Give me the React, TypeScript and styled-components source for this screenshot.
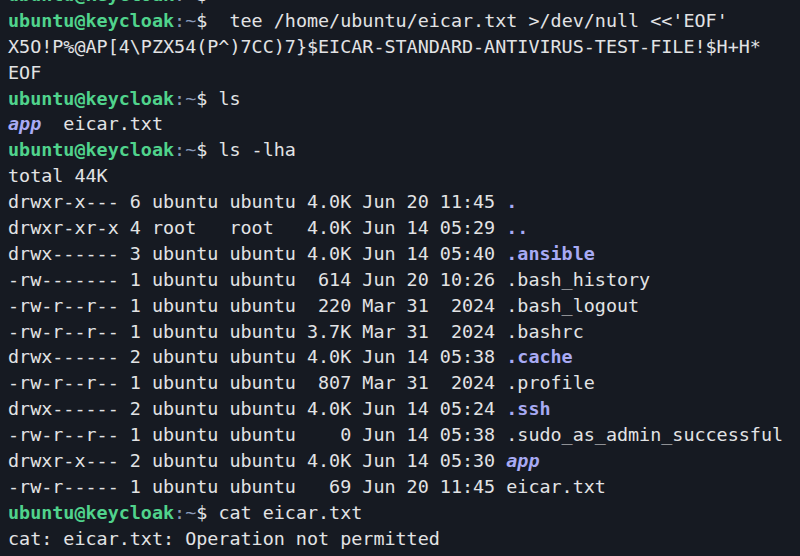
import React from "react";
import styled, { createGlobalStyle } from "styled-components";

const Global = createGlobalStyle`
  html, body { margin: 0; padding: 0; background: #161a22; }
  body { width: 800px; height: 556px; overflow: hidden; }
`;

const Terminal = styled.div`
  width: 800px;
  height: 556px;
  overflow: hidden;
  background: #161a22;
  box-sizing: border-box;
`;

const Screen = styled.pre`
  margin: -18px 0 0 0;
  padding: 0 0 0 8px;
  font-family: "DejaVu Sans Mono", "Liberation Mono", monospace;
  font-size: 18.4px;
  line-height: 25.9px;
  color: #e2e3e5;
  white-space: pre;
`;

const Line = styled.div`
  height: 25.9px;
`;

const User = styled.span`
  color: #50d38c;
  font-weight: bold;
`;

const Path = styled.span`
  color: #8799b8;
`;

const Dollar = styled.span`
  color: #e2e3e5;
`;

const Dir = styled.span<{ $italic?: boolean }>`
  color: #a8aaf4;
  font-weight: bold;
  font-style: ${(p) => (p.$italic ? "italic" : "normal")};
`;

const Prompt: React.FC<{ cmd: string }> = ({ cmd }) => (
  <Line>
    <User>ubuntu@keycloak</User>
    <Path>:~</Path>
    <Dollar>$</Dollar>
    {cmd}
  </Line>
);

type Entry = { meta: string; name: string; dir?: boolean; italic?: boolean };

const entries: Entry[] = [
  { meta: "drwxr-x--- 6 ubuntu ubuntu 4.0K Jun 20 11:45 ", name: ".", dir: true },
  { meta: "drwxr-xr-x 4 root   root   4.0K Jun 14 05:29 ", name: "..", dir: true },
  { meta: "drwx------ 3 ubuntu ubuntu 4.0K Jun 14 05:40 ", name: ".ansible", dir: true },
  { meta: "-rw------- 1 ubuntu ubuntu  614 Jun 20 10:26 ", name: ".bash_history" },
  { meta: "-rw-r--r-- 1 ubuntu ubuntu  220 Mar 31  2024 ", name: ".bash_logout" },
  { meta: "-rw-r--r-- 1 ubuntu ubuntu 3.7K Mar 31  2024 ", name: ".bashrc" },
  { meta: "drwx------ 2 ubuntu ubuntu 4.0K Jun 14 05:38 ", name: ".cache", dir: true },
  { meta: "-rw-r--r-- 1 ubuntu ubuntu  807 Mar 31  2024 ", name: ".profile" },
  { meta: "drwx------ 2 ubuntu ubuntu 4.0K Jun 14 05:24 ", name: ".ssh", dir: true },
  { meta: "-rw-r--r-- 1 ubuntu ubuntu    0 Jun 14 05:38 ", name: ".sudo_as_admin_successful" },
  { meta: "drwxr-x--- 2 ubuntu ubuntu 4.0K Jun 14 05:30 ", name: "app", dir: true, italic: true },
  { meta: "-rw-r----- 1 ubuntu ubuntu   69 Jun 20 11:45 ", name: "eicar.txt" },
];

export default function App() {
  return (
    <Terminal>
      <Global />
      <Screen>
        <Prompt cmd=" " />
        <Prompt cmd="  tee /home/ubuntu/eicar.txt >/dev/null <<'EOF'" />
        <Line>X5O!P%@AP[4\PZX54(P^)7CC)7{"}"}$EICAR-STANDARD-ANTIVIRUS-TEST-FILE!$H+H*</Line>
        <Line>EOF</Line>
        <Prompt cmd=" ls" />
        <Line>
          <Dir $italic>app</Dir>
          {"  eicar.txt"}
        </Line>
        <Prompt cmd=" ls -lha" />
        <Line>total 44K</Line>
        {entries.map((e) => (
          <Line key={e.name}>
            {e.meta}
            {e.dir ? <Dir $italic={e.italic}>{e.name}</Dir> : e.name}
          </Line>
        ))}
        <Prompt cmd=" cat eicar.txt" />
        <Line>cat: eicar.txt: Operation not permitted</Line>
      </Screen>
    </Terminal>
  );
}
